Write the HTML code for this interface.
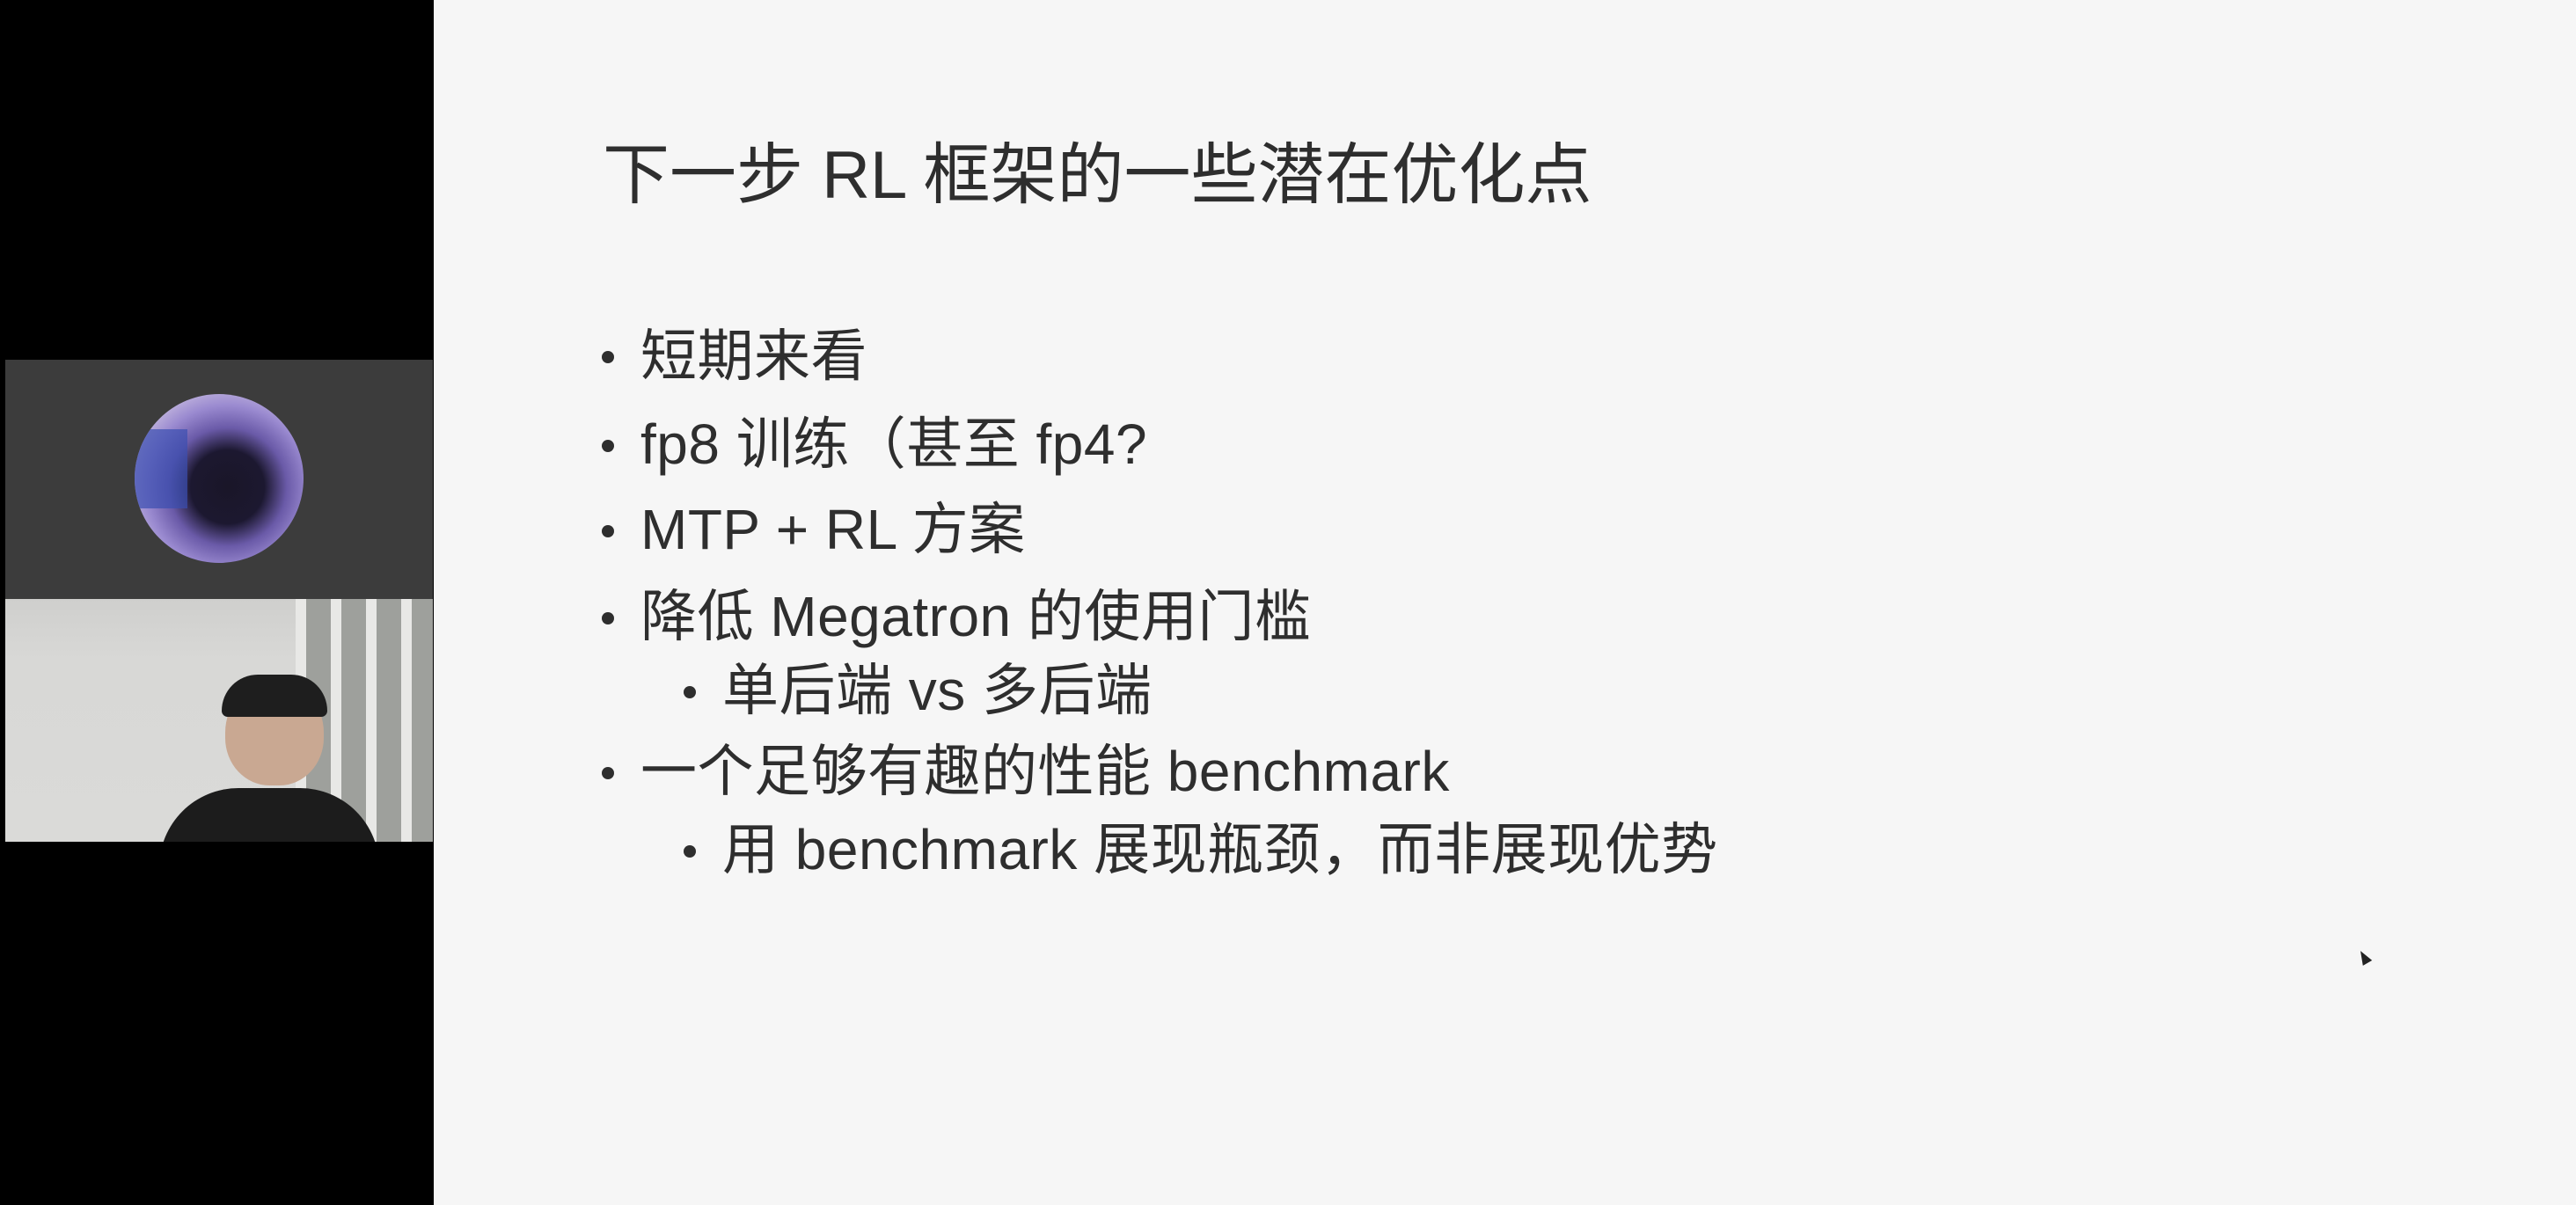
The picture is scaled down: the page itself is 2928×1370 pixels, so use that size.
<!DOCTYPE html>
<html><head><meta charset="utf-8"><style>
html,body{margin:0;padding:0;width:2928px;height:1370px;overflow:hidden;background:#000}
.slide{position:absolute;left:493px;top:0;width:2435px;height:1370px;background:#f6f6f6}
.t{position:absolute;white-space:nowrap;color:#2e2e2e;font-family:"Liberation Sans","Noto Sans CJK SC",sans-serif;line-height:1}
.title{font-size:76px;left:685px;top:162px}
.b{font-size:64px;letter-spacing:0.5px}
.dot{position:absolute;width:14px;height:14px;border-radius:50%;background:#2e2e2e}
</style></head><body>
<div class="slide"></div>
<div style="position:absolute;left:6px;top:409px;width:486px;height:272px;background:#3c3c3c"></div>
<div style="position:absolute;left:153px;top:448px;width:192px;height:192px;border-radius:50%;background:radial-gradient(circle at 55% 55%,#1a1628 0,#1c1830 28%,#6a5aa8 45%,#9a8ad0 62%,#c8bce0 80%);overflow:hidden">
 <div style="position:absolute;left:0;top:40px;width:60px;height:90px;background:#3a4fb0;opacity:.7"></div>
</div>
<div style="position:absolute;left:6px;top:681px;width:486px;height:276px;background:linear-gradient(#cfcfcd 0,#d8d8d6 25%,#dadad8 100%);overflow:hidden">
 <div style="position:absolute;left:330px;top:0;width:160px;height:276px;background:repeating-linear-gradient(90deg,#e8e8e6 0 12px,#9ea09c 12px 40px)"></div>
 <div style="position:absolute;left:250px;top:92px;width:112px;height:120px;border-radius:50% 50% 45% 45%;background:#c9a892"></div>
 <div style="position:absolute;left:246px;top:86px;width:120px;height:48px;border-radius:60px 60px 10px 10px;background:#1e1e1e"></div>
 <div style="position:absolute;left:175px;top:215px;width:250px;height:90px;border-radius:90px 90px 0 0;background:#1c1c1c"></div>
</div>
<div class="t title">下一步 RL 框架的一些潜在优化点</div>
<div class="dot" style="left:684px;top:399px"></div><div class="t b" style="left:728px;top:373px">短期来看</div>
<div class="dot" style="left:684px;top:500px"></div><div class="t b" style="left:728px;top:473px">fp8 训练（甚至 fp4?</div>
<div class="dot" style="left:684px;top:597px"></div><div class="t b" style="left:728px;top:570px">MTP + RL 方案</div>
<div class="dot" style="left:684px;top:696px"></div><div class="t b" style="left:728px;top:669px">降低 Megatron 的使用门槛</div>
<div class="dot" style="left:777px;top:780px"></div><div class="t b" style="left:821px;top:753px">单后端 vs 多后端</div>
<div class="dot" style="left:684px;top:872px"></div><div class="t b" style="left:728px;top:845px">一个足够有趣的性能 benchmark</div>
<div class="dot" style="left:777px;top:961px"></div><div class="t b" style="left:821px;top:934px">用 benchmark 展现瓶颈，而非展现优势</div>
<div style="position:absolute;left:2681px;top:1080px;width:0;height:0;border-left:6px solid transparent;border-right:6px solid transparent;border-bottom:16px solid #222;transform:rotate(-30deg)"></div>
</body></html>
